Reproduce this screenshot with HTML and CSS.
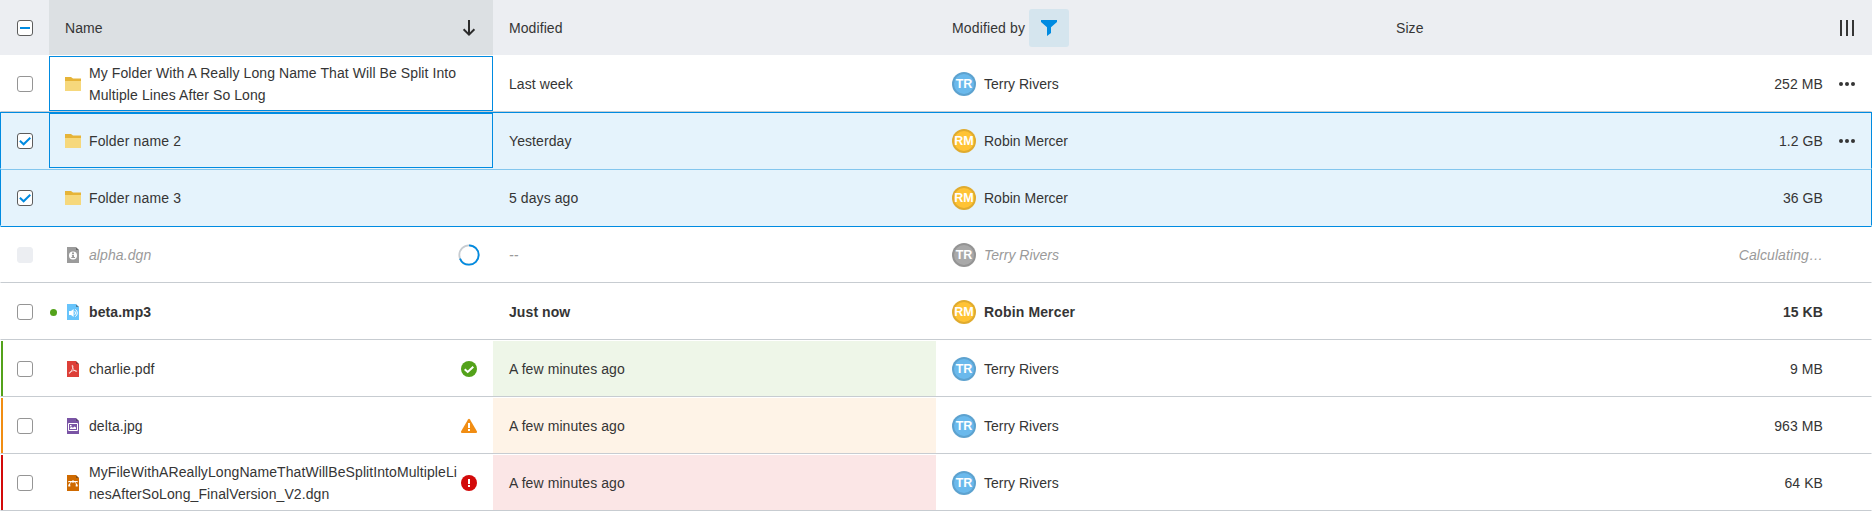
FILE: index.html
```html
<!DOCTYPE html>
<html lang="en">
<head>
<meta charset="utf-8">
<title>Files</title>
<link rel="stylesheet" href="styles.css">
</head>
<body>
<svg class="defs" aria-hidden="true">
  <symbol id="folder" viewBox="0 0 16 16"><path fill="#e6b438" d="M0 1h6l2 1.500H16V6H0z"/><path fill="#f6d87c" d="M0 5h16v10H0z"/></symbol>
  <symbol id="page" viewBox="0 0 16 16"><path fill="currentColor" d="M2 0h9l3 3v13H2z"/><path d="M11 .5V3h3z" opacity=".5"/></symbol>
  <symbol id="more" viewBox="0 0 16 16"><circle cx="2" cy="8" r="2"/><circle cx="8" cy="8" r="2"/><circle cx="14" cy="8" r="2"/></symbol>
</svg>
<div class="table">
  <div class="head">
    <div class="cell slot"><span class="check mixed"><svg viewBox="0 0 16 16"><path fill="#008be1" d="M3 7h10v2H3z"/></svg></span></div>
    <div class="cell sorted"><span class="grow">Name</span><svg class="icon" viewBox="0 0 16 16"><path fill="none" stroke="#2b2b2b" stroke-width="2" d="M8 0v14M2.600 9.300L8 14.600l5.400-5.300"/></svg></div>
    <div class="cell">Modified</div>
    <div class="cell"><span class="label">Modified by</span><span class="filter"><svg class="icon" viewBox="0 0 16 16"><path fill="#008be1" d="M0 0h16v2l-6 5.300V13l-4 3V7.300L0 2z"/></svg></span></div>
    <div class="cell">Size</div>
    <div class="cell slot"><svg class="icon" viewBox="0 0 16 16"><path d="M1 0h2v16H1zM7 0h2v16H7zM13 0h2v16h-2z"/></svg></div>
  </div>

  <div class="row">
    <div class="cell slot"><span class="check"></span></div>
    <div class="cell focus"><svg class="icon file"><use href="#folder"/></svg><span class="grow">My Folder With A Really Long Name That Will Be Split Into Multiple Lines After So Long</span></div>
    <div class="cell">Last week</div>
    <div class="cell person"><span class="avatar blue">TR</span>Terry Rivers</div>
    <div class="cell size">252 MB</div>
    <div class="cell slot"><svg class="icon"><use href="#more"/></svg></div>
  </div>

  <div class="row selected">
    <div class="cell slot"><span class="check on"><svg viewBox="0 0 16 16"><path fill="none" stroke="#008be1" stroke-width="2" d="M2.900 7.800l3.700 3.500 6.700-6.600"/></svg></span></div>
    <div class="cell focus"><svg class="icon file"><use href="#folder"/></svg><span class="grow label">Folder name 2</span></div>
    <div class="cell">Yesterday</div>
    <div class="cell person"><span class="avatar yellow">RM</span>Robin Mercer</div>
    <div class="cell size">1.2 GB</div>
    <div class="cell slot"><svg class="icon"><use href="#more"/></svg></div>
  </div>

  <div class="row selected inner">
    <div class="cell slot"><span class="check on"><svg viewBox="0 0 16 16"><path fill="none" stroke="#008be1" stroke-width="2" d="M2.900 7.800l3.700 3.500 6.700-6.600"/></svg></span></div>
    <div class="cell"><svg class="icon file"><use href="#folder"/></svg><span class="grow label">Folder name 3</span></div>
    <div class="cell">5 days ago</div>
    <div class="cell person"><span class="avatar yellow">RM</span>Robin Mercer</div>
    <div class="cell size">36 GB</div>
    <div class="cell slot"></div>
  </div>

  <div class="row loading after-selected">
    <div class="cell slot"><span class="check off"></span></div>
    <div class="cell"><svg class="icon file" viewBox="0 0 16 16" color="#9b9b9b"><use href="#page"/><circle cx="8" cy="8.500" r="4" fill="#fff"/><path fill="#9b9b9b" d="M7 5.500h2v1.500H7zM6.700 7.700H9v2.300h1v1H6.300v-1h1z"/></svg><span class="grow">alpha.dgn</span><svg class="spinner" viewBox="0 0 22 22"><circle cx="11" cy="11" r="9.700" stroke="#c7ccd1"/><circle cx="11" cy="11" r="9.700" stroke="#008be1" pathLength="100" stroke-dasharray="69 31" transform="rotate(-90 11 11)"/></svg></div>
    <div class="cell">--</div>
    <div class="cell person"><span class="avatar gray">TR</span>Terry Rivers</div>
    <div class="cell size">Calculating…</div>
    <div class="cell slot"></div>
  </div>

  <div class="row unread">
    <div class="cell slot"><span class="check"></span></div>
    <div class="cell dot"><svg class="icon file" viewBox="0 0 16 16" color="#68c4fb"><use href="#page"/><path fill="#fff" d="M4 7h2l2.600-2v8L6 11H4z"/><path fill="none" stroke="#fff" d="M9.700 7.200c1 .8 1 2.800 0 3.600M10.300 5.400c2.600 1.700 2.600 5.500 0 7.200"/></svg><span class="grow">beta.mp3</span></div>
    <div class="cell">Just now</div>
    <div class="cell"><span class="avatar yellow">RM</span><span class="label">Robin Mercer</span></div>
    <div class="cell size">15 KB</div>
    <div class="cell slot"></div>
  </div>

  <div class="row positive">
    <div class="cell slot"><span class="check"></span></div>
    <div class="cell"><svg class="icon file" viewBox="0 0 16 16" color="#dd3f38"><use href="#page"/><path fill="none" stroke="#fff" stroke-width=".7" d="M7 4.500c1.400-.6 1 1.500.5 3-.6 2-1.800 4-2.700 4.700-.8.500-1-.4 0-1.100 1.500-1 4-1.800 5.800-1.600 1.600.2 1.400 1.300.3 1C9.300 10 7.700 7.400 7 4.500z"/></svg><span class="grow">charlie.pdf</span><svg class="icon" viewBox="0 0 16 16"><circle cx="8" cy="8" r="8" fill="#53a21a"/><path fill="none" stroke="#fff" stroke-width="2" d="M3.700 8.300l3 2.700 5.600-5.300"/></svg></div>
    <div class="cell tint">A few minutes ago</div>
    <div class="cell person"><span class="avatar blue">TR</span>Terry Rivers</div>
    <div class="cell size">9 MB</div>
    <div class="cell slot"></div>
  </div>

  <div class="row warning">
    <div class="cell slot"><span class="check"></span></div>
    <div class="cell"><svg class="icon file" viewBox="0 0 16 16" color="#7a54a5"><use href="#page"/><path fill="none" stroke="#fff" d="M3.500 5.500h9v7h-9z"/><path fill="#fff" d="M5 7h1.500v1.500H5zM5 11V9.800l1.500-.8 1.500.8L9.500 8.500 11 9.500V11z"/></svg><span class="grow">delta.jpg</span><svg class="icon" viewBox="0 0 16 16"><path fill="#f18d13" d="M7 1.500q1-1.400 2 0l7 12q.3 1.300-1 1.500H1q-1.300-.2-1-1.500z"/><path fill="#fff" d="M7 5h2v5H7zM7 11h2v2H7z"/></svg></div>
    <div class="cell tint">A few minutes ago</div>
    <div class="cell person"><span class="avatar blue">TR</span>Terry Rivers</div>
    <div class="cell size">963 MB</div>
    <div class="cell slot"></div>
  </div>

  <div class="row negative">
    <div class="cell slot"><span class="check"></span></div>
    <div class="cell"><svg class="icon file" viewBox="0 0 16 16" color="#cf6a00"><use href="#page"/><path fill="none" stroke="#fff" d="M4.300 10.500c.2-2.500 1.700-4 3.700-4s3.500 1.500 3.700 4M4 6.500h8"/><path fill="#fff" d="M7 5.500h2v2H7zM3.300 9.500h2v2h-2zM10.700 9.500h2v2h-2zM3.300 6h1v1.300h-1zM11.700 6h1v1.300h-1z"/></svg><span class="grow">MyFileWithAReallyLongNameThatWillBeSplitIntoMultipleLinesAfterSoLong_FinalVersion_V2.dgn</span><svg class="icon" viewBox="0 0 16 16"><circle cx="8" cy="8" r="8" fill="#d30a0a"/><path fill="#fff" d="M7 4h2v5H7zM7 10h2v2H7z"/></svg></div>
    <div class="cell tint">A few minutes ago</div>
    <div class="cell person"><span class="avatar blue">TR</span>Terry Rivers</div>
    <div class="cell size">64 KB</div>
    <div class="cell slot"></div>
  </div>
</div>
</body>
</html>
```
FILE: styles.css
```css
* {
  box-sizing: border-box;
}

body {
  margin: 0;
  background: #fff;
  color: #353535;
  font: 14px/22px "Liberation Sans", Arial, sans-serif;
  letter-spacing: 0.085px;
}

.defs {
  display: none;
}

.head,
.row {
  display: grid;
  grid-template-columns: 48px 444px 443px 444px 443px 48px;
}

.head {
  height: 55px;
  padding: 0 1px;
  background: #eceef2;
}

.row {
  --line: #c7ccd1;
  height: 57px;
  border: 1px solid transparent;
  border-bottom-color: var(--line);
}

.cell {
  position: relative;
  display: flex;
  align-items: center;
  min-width: 0;
  padding: 1px 16px 0;
}

.slot {
  justify-content: center;
  padding: 1px 0 0;
}

.size {
  justify-content: flex-end;
  padding-right: 0;
}

.sorted {
  background: #dce0e3;
}

.grow {
  flex: 1;
  min-width: 0;
  overflow-wrap: anywhere;
}

.label {
  letter-spacing: 0.14px;
}

.person {
  letter-spacing: 0;
}

.icon {
  flex: none;
  width: 16px;
  height: 16px;
  fill: #353535;
}

.file {
  margin-right: 8px;
}

.filter {
  display: flex;
  align-items: center;
  justify-content: center;
  width: 40px;
  height: 38px;
  margin-left: 4px;
  border-radius: 3px;
  background: #d5e5ee;
}

.check {
  width: 16px;
  height: 16px;
  border: 1px solid #959595;
  border-radius: 3px;
  background: #fff;
}

.check svg {
  display: block;
  width: 16px;
  height: 16px;
  margin: -1px;
}

.mixed,
.on {
  border-color: #5c5c5c;
}

.off {
  border-color: #eceef2;
  background: #eceef2;
}

.avatar {
  display: flex;
  flex: none;
  align-items: center;
  justify-content: center;
  width: 24px;
  height: 24px;
  margin-right: 8px;
  border: 2px solid rgba(0, 0, 0, 0.12);
  border-radius: 50%;
  color: #fff;
  font: bold 12.5px/20px "Liberation Sans", Arial, sans-serif;
  letter-spacing: 0;
}

.blue {
  background: #6ab9ec;
}

.yellow {
  background: #ffc335;
}

.gray {
  background: #a9a9a9;
}

.spinner {
  flex: none;
  width: 22px;
  height: 22px;
  margin-right: -3px;
  fill: none;
  stroke-width: 1.8;
}

.selected {
  border-color: #008be1 #008be1 transparent;
  background: #e5f3fc;
}

.inner {
  border-top-color: #83c6ee;
}

.after-selected {
  border-top-color: #008be1;
}

.focus {
  box-shadow: inset 0 0 0 1px #008be1;
}

.loading {
  color: #9a9a9a;
  font-style: italic;
}

.unread {
  font-weight: bold;
}

/* Unread marker in the name cell's left padding */
.dot::before {
  content: "";
  position: absolute;
  top: 25px;
  left: 1px;
  width: 7px;
  height: 7px;
  border-radius: 50%;
  background: #53a21a;
}

.positive {
  --status: #53a21a;
  --tint: #eef6e8;
}

.warning {
  --status: #f18d13;
  --tint: #fef3e7;
}

.negative {
  --status: #d30a0a;
  --tint: #fbe6e6;
}

.positive > .slot:first-child,
.warning > .slot:first-child,
.negative > .slot:first-child {
  box-shadow: inset 2px 0 var(--status);
}

.tint {
  background: var(--tint);
}
```
